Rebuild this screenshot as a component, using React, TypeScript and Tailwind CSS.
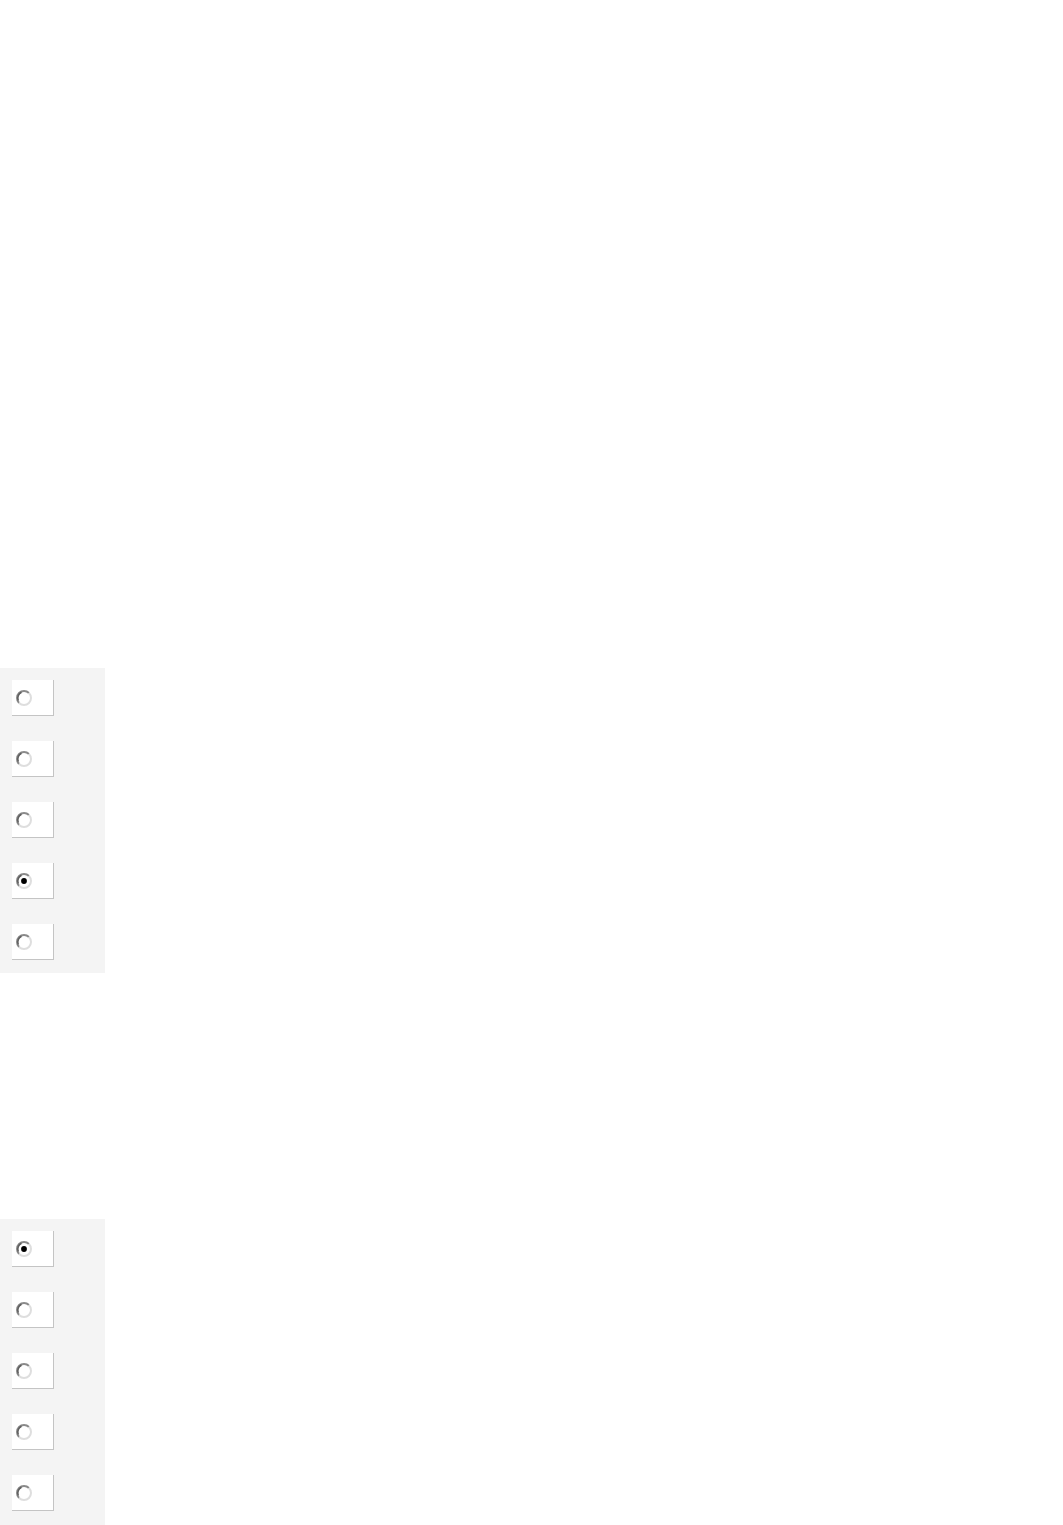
import React from "react";

const Radio: React.FC<{ checked?: boolean }> = ({ checked }) => {
  return (
    <svg width="18" height="18" viewBox="0 0 18 18" className="block">
      <circle cx="9" cy="9" r="7" fill="#ffffff" />
      <path
        d="M4.05 13.95 A7 7 0 0 1 13.95 4.05"
        fill="none"
        stroke="#8a8a8a"
        strokeWidth="2"
      />
      <path
        d="M13.95 4.05 A7 7 0 0 1 4.05 13.95"
        fill="none"
        stroke="#dedede"
        strokeWidth="2"
      />
      <path
        d="M3.2 11.5 A6.6 6.6 0 0 1 6.5 3.2"
        fill="none"
        stroke="#5f5f5f"
        strokeWidth="1.6"
      />
      {checked ? <circle cx="9" cy="9" r="2.9" fill="#000000" /> : null}
    </svg>
  );
};

const Choice: React.FC<{ checked?: boolean }> = ({ checked }) => {
  return (
    <div className="w-[42px] h-[36px] bg-white border-r border-b border-[#c4c4c4] flex items-center pl-[3px]">
      <Radio checked={checked} />
    </div>
  );
};

const Panel: React.FC<{ selected: number; height: string }> = ({
  selected,
  height
}) => {
  return (
    <div
      className={`w-[105px] ${height} bg-[#f4f4f4] pt-3 pl-3 flex flex-col gap-[25px]`}
    >
      {[0, 1, 2, 3, 4].map((i) => (
        <Choice key={i} checked={i === selected} />
      ))}
    </div>
  );
};

const App: React.FC = () => {
  return (
    <div className="w-full min-h-[1525px] bg-white flex flex-col">
      <div className="h-[668px]" />
      <Panel selected={3} height="h-[305px]" />
      <div className="h-[246px]" />
      <Panel selected={0} height="h-[306px]" />
    </div>
  );
};

export default App;
